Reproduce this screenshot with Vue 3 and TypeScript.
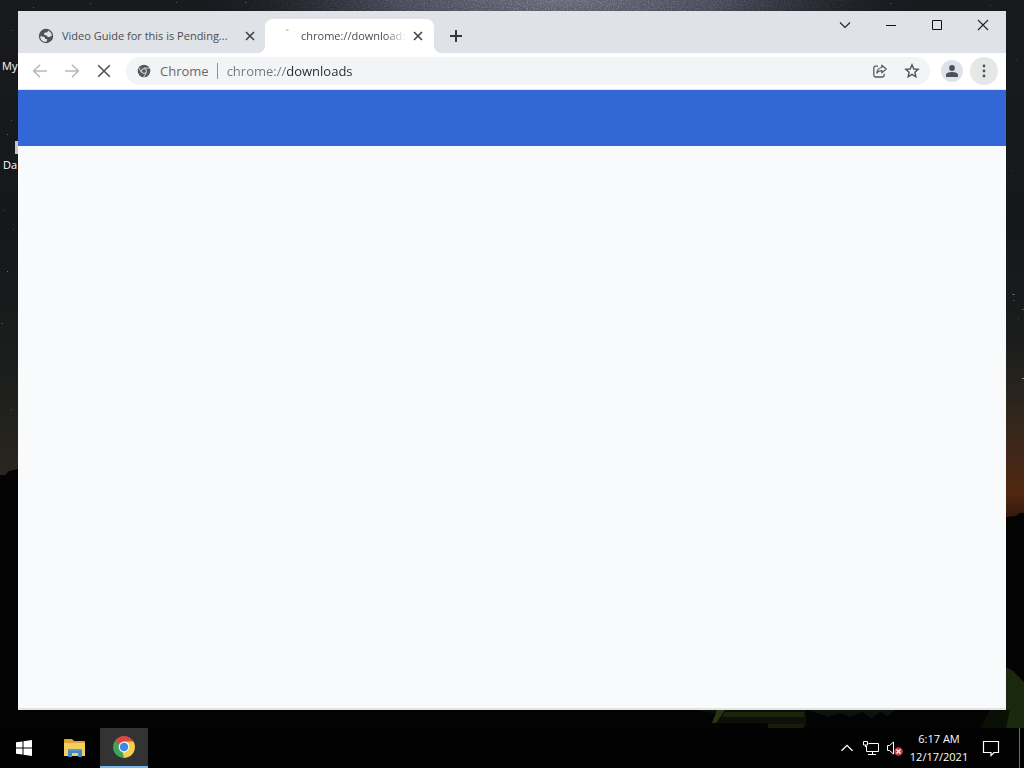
<script setup lang="ts">
import { ref } from 'vue'

const address = ref('chrome://downloads')
const stars: [number, number, number, number][] = [
  [12, 30, 1, 0.25], [33, 7, 1, 0.25], [90, 3, 1, 0.25], [176, 2, 1, 0.25], [245, 2, 2, 0.2],
  [7, 134, 1, 0.3], [11, 120, 1, 0.25], [4, 210, 1, 0.2], [13, 229, 1, 0.2], [7, 271, 1, 0.4],
  [1, 323, 2, 0.2], [11, 409, 1, 0.25], [1012, 294, 3, 0.3], [1013, 300, 2, 0.2],
  [1022, 309, 2, 0.25], [1018, 318, 1, 0.2], [1022, 378, 3, 0.5], [890, 3, 2, 0.15],
  [990, 5, 1, 0.2], [1016, 60, 1, 0.15], [1012, 170, 1, 0.15],
]
</script>

<template>
  <div class="desktop">
    <svg class="wallpaper" viewBox="0 0 1024 768" preserveAspectRatio="none" aria-hidden="true">
      <defs>
        <linearGradient id="sky" x1="0" y1="0" x2="0" y2="1">
          <stop offset="0" stop-color="#191a1e" />
          <stop offset="0.3" stop-color="#15181a" />
          <stop offset="0.5" stop-color="#1d1f1d" />
          <stop offset="0.62" stop-color="#29261f" />
        </linearGradient>
        <radialGradient id="milky" cx="0.5" cy="0.5" r="0.5">
          <stop offset="0" stop-color="#6a6878" />
          <stop offset="0.45" stop-color="#464858" />
          <stop offset="1" stop-color="#1b1c22" stop-opacity="0" />
        </radialGradient>
        <linearGradient id="glow" x1="0" y1="0" x2="0" y2="1">
          <stop offset="0" stop-color="#2a2720" stop-opacity="0" />
          <stop offset="0.55" stop-color="#3a271a" />
          <stop offset="0.85" stop-color="#502711" />
          <stop offset="1" stop-color="#32170c" />
        </linearGradient>
        <linearGradient id="fade" x1="0" y1="0" x2="1" y2="0">
          <stop offset="0" stop-color="#000" />
          <stop offset="0.5" stop-color="#fff" />
          <stop offset="1" stop-color="#000" />
        </linearGradient>
        <mask id="band"><rect x="200" width="720" height="11" fill="url(#fade)" /></mask>
        <filter id="grain" x="0" y="0" width="1" height="1">
          <feTurbulence type="fractalNoise" baseFrequency="0.7" numOctaves="2" seed="4" />
          <feColorMatrix values="0 0 0 0 0.75  0 0 0 0 0.75  0 0 0 0 0.85  1.6 0 0 0 -0.65" />
        </filter>
      </defs>
      <rect width="1024" height="768" fill="url(#sky)" />
      <ellipse cx="560" cy="0" rx="370" ry="60" fill="url(#milky)" />
      <g mask="url(#band)"><rect x="200" width="720" height="11" filter="url(#grain)" opacity="0.45" /></g>
      <rect x="1000" y="340" width="24" height="180" fill="url(#glow)" />
      <rect
        v-for="([x, y, w, o], i) in stars" :key="i"
        :x="x" :y="y" :width="w" height="1" fill="#fff" :opacity="o"
      />
      <path d="M0 475 5 475 9 471 18 469V520H1006V517L1016 516 1020 513 1024 513V768H0Z" fill="#030303" />
      <path d="M1006 667 1013 671 1024 682V728H990L1006 710Z" fill="#1a280b" />
      <path d="M990 710H1010L1006 728H980Z" fill="#0a1006" />
      <path d="M694 710H806V726H770L766 723H712L718 714Z" fill="#0c1008" />
      <path d="M717 710H725L716 723H712Z" fill="#2b3514" />
      <path d="M725 712H804V717H722Z" fill="#1a230b" />
      <path d="M768 724H804V728H768Z" fill="#161d0a" />
      <path d="M808 710H895L888 716 880 712 872 718 862 712 850 717 840 713 828 717Z" fill="#0d120a" />
    </svg>
    <span class="shortcut computer">My</span>
    <span class="shortcut data">Da</span>
    <span class="shortcut-art"></span>

    <main class="window">
      <header class="tabstrip">
        <div class="tab">
          <svg class="favicon" width="16" height="16" viewBox="0 0 16 16" aria-hidden="true">
            <circle cx="8" cy="8" r="7.2" fill="#505357" />
            <path d="M2.2 8.3 4.4 8.4C6.5 8.6 7.3 9.4 7 11H9V12.5C8.8 13.5 8 14 7.1 13.9 4.2 13.5 2.1 11.2 2.2 8.3ZM10 2.4C12.3 3.3 13.9 5.4 13.8 8L12.8 7.9C12.4 9 11 9.2 9.8 8.8 9 8.4 8.8 7.3 8 7.2 6.2 7 5.8 6.3 6.2 5.4 6.5 4.5 7.2 4.4 8.1 4.5 9.3 4.5 9.9 3.7 10 2.4Z" fill="#e1e4e8" />
          </svg>
          <span class="title">Video Guide for this is Pending...</span>
          <button class="close" aria-label="Close tab">
            <svg width="10" height="10" viewBox="0 0 10 10"><path d="M1 1 9 9M9 1 1 9" stroke="#3f4246" stroke-width="1.6" /></svg>
          </button>
        </div>
        <div class="tab active">
          <svg class="favicon" width="16" height="16" viewBox="0 0 16 16" aria-hidden="true">
            <path d="M9 2.5 11.5 1.7" stroke="#c4c6c8" stroke-width="1.6" />
          </svg>
          <span class="title">chrome://downloads</span>
          <button class="close" aria-label="Close tab">
            <svg width="10" height="10" viewBox="0 0 10 10"><path d="M1 1 9 9M9 1 1 9" stroke="#3f4246" stroke-width="1.6" /></svg>
          </button>
        </div>
        <button class="new-tab" aria-label="New tab">
          <svg width="12" height="12" viewBox="0 0 12 12"><path d="M6 0V12M0 6H12" stroke="#35383c" stroke-width="2" /></svg>
        </button>
        <div class="controls">
          <button aria-label="Search tabs">
            <svg width="12" height="12" viewBox="0 0 12 12"><path d="M1 3.5 6 8.5 11 3.5" fill="none" stroke="#222" stroke-width="1.1" /></svg>
          </button>
          <button aria-label="Minimize">
            <svg width="12" height="12" viewBox="0 0 12 12"><path d="M1 6.5H11" stroke="#111" /></svg>
          </button>
          <button aria-label="Maximize">
            <svg width="12" height="12" viewBox="0 0 12 12"><path d="M1.5 1.5H10.5V10.5H1.5Z" fill="none" stroke="#111" /></svg>
          </button>
          <button aria-label="Close">
            <svg width="12" height="12" viewBox="0 0 12 12"><path d="M1 1 11 11M11 1 1 11" stroke="#222" stroke-width="1.1" /></svg>
          </button>
        </div>
      </header>

      <nav class="toolbar" aria-label="Browser">
        <button class="nav" aria-label="Back">
          <svg width="16" height="16" viewBox="0 0 16 16"><path d="M15 8H2M8 1.7 1.7 8 8 14.3" fill="none" stroke="#b6b8bb" stroke-width="1.6" /></svg>
        </button>
        <button class="nav" aria-label="Forward">
          <svg width="16" height="16" viewBox="0 0 16 16"><path d="M1 8H14M8 1.7 14.3 8 8 14.3" fill="none" stroke="#b6b8bb" stroke-width="1.6" /></svg>
        </button>
        <button class="nav" aria-label="Stop">
          <svg width="16" height="16" viewBox="0 0 16 16"><path d="M2.2 2.2 13.8 13.8M13.8 2.2 2.2 13.8" stroke="#505357" stroke-width="1.6" /></svg>
        </button>
        <div class="omnibox">
          <svg width="14" height="14" viewBox="0 0 14 14" aria-hidden="true">
            <circle cx="7" cy="7" r="6.3" fill="#55585c" />
            <path d="M7 4.1H12.6M4.5 8.5 1.8 3.7M9.5 8.5 6.7 13.2" stroke="#f1f3f4" stroke-width="0.8" />
            <circle cx="7" cy="7" r="2.4" fill="#55585c" stroke="#f1f3f4" stroke-width="0.9" />
          </svg>
          <label for="address">Chrome</label>
          <input id="address" v-model="address" type="text" spellcheck="false" />
          <button aria-label="Share this page">
            <svg width="16" height="16" viewBox="0 0 16 16"><path d="M6 3.2H3.6Q1.8 3.2 1.8 5V12.2Q1.8 14 3.6 14H10.4Q12.2 14 12.2 12.2V10.8" fill="none" stroke="#56595d" stroke-width="1.3" /><path d="M9.8 2.2 14.3 6 9.8 9.8V7.6Q6.6 7.4 4.8 10.2 5.2 5.2 9.8 4.5Z" fill="none" stroke="#56595d" stroke-width="1.2" stroke-linejoin="round" /></svg>
          </button>
          <button aria-label="Bookmark this tab">
            <svg width="16" height="16" viewBox="0 0 16 16"><path d="M8 1.8 9.8 6 14.2 6.4 10.9 9.3 11.9 13.8 8 11.4 4.1 13.8 5.1 9.3 1.8 6.4 6.2 6Z" fill="none" stroke="#505357" stroke-width="1.4" /></svg>
          </button>
        </div>
        <button class="avatar" aria-label="Profile">
          <svg width="12" height="12" viewBox="0 0 12 12"><circle cx="6" cy="3" r="2.9" fill="#4c5160" /><path d="M0 12V10C0 7.8 3.5 7 6 7S12 7.8 12 10V12Z" fill="#4c5160" /></svg>
        </button>
        <button class="menu" aria-label="Menu">
          <svg width="4" height="14" viewBox="0 0 4 14"><g fill="#505357"><circle cx="2" cy="2" r="1.4" /><circle cx="2" cy="7" r="1.4" /><circle cx="2" cy="12" r="1.4" /></g></svg>
        </button>
      </nav>
      <div class="page-bar"></div>
      <section class="page"></section>
    </main>

    <footer class="taskbar">
      <button class="app" aria-label="Start">
        <svg width="16" height="16" viewBox="0 0 16 16"><path d="M0 2.3 6.5 1.4V7.5H0ZM7.5 1.2 16 0V7.5H7.5ZM0 8.5H6.5V14.6L0 13.7ZM7.5 8.5H16V16L7.5 14.8Z" fill="#fff" /></svg>
      </button>
      <button class="app" aria-label="File Explorer">
        <svg width="22" height="20" viewBox="-1 0 22 20"><path d="M0 2Q0 1 1 1H8L10 3H20Q21 3 21 4V18H0Z" fill="#dba735" /><path d="M0 5H21V18H0Z" fill="#f2cf62" /><path d="M4 11H18V19H14V15H8V19H4Z" fill="#3f87c6" /><path d="M4 11H18V13H4Z" fill="#5799ce" /></svg>
      </button>
      <button class="app running" aria-label="Google Chrome">
        <svg width="24" height="24" viewBox="0 0 24 24">
          <path d="M12 12 2.5 6.5A11 11 0 0 1 21.5 6.5Z" fill="#d94a40" />
          <path d="M12 12 21.5 6.5A11 11 0 0 1 12 23Z" fill="#f8cf4b" />
          <path d="M12 12V23A11 11 0 0 1 2.5 6.5Z" fill="#3fa459" />
          <path d="M12 6.5H21.5L17 14.5Z" fill="#f8cf4b" /><path d="M7 14.5 2.5 6.5 12 12Z" fill="#3fa459" /><path d="M12 23 17 14.5 10 15Z" fill="#f8cf4b" />
          <circle cx="12" cy="12" r="5.4" fill="#f4f6f8" /><circle cx="12" cy="12" r="4.2" fill="#4385e5" />
        </svg>
      </button>
      <div class="tray">
        <button aria-label="Show hidden icons">
          <svg width="14" height="14" viewBox="0 0 14 14"><path d="M1.5 9.8 7 4.3 12.5 9.8" fill="none" stroke="#fff" stroke-width="1.3" /></svg>
        </button>
        <button aria-label="Network">
          <svg width="16" height="16" viewBox="0 0 16 16"><path d="M5.5 3.5H15.5V11.5H3.5V6M9.5 11.5V14M5 14.5H13M.5 1.5H4.5V5H.5ZM2.5 5V7" fill="none" stroke="#fff" /></svg>
        </button>
        <button aria-label="Volume muted">
          <svg width="18" height="16" viewBox="0 0 18 16"><path d="M1.5 5.5H3.5L7.5 2V14L3.5 10.5H1.5Z" fill="none" stroke="#fff" /><circle cx="12.5" cy="11.5" r="4.3" fill="#d13a40" /><path d="M10.5 9.5 14.5 13.5M14.5 9.5 10.5 13.5" stroke="#fff" stroke-width="1.2" /></svg>
        </button>
        <button class="clock"><time>6:17 AM</time><time>12/17/2021</time></button>
        <button class="notify" aria-label="Notifications">
          <svg width="18" height="18" viewBox="0 0 18 18"><path d="M1.5 2.5H16.5V13.5H12L9 16.5V13.5H1.5Z" fill="none" stroke="#fff" stroke-width="1.2" /></svg>
        </button>
        <button class="peek" aria-label="Show desktop"></button>
      </div>
    </footer>
  </div>
</template>

<style>
body {
  margin: 0;
  background: #000;
}
</style>

<style scoped>
.desktop {
  position: relative;
  isolation: isolate;
  box-sizing: border-box;
  display: flex;
  flex-direction: column;
  min-height: 100vh;
  padding-top: 11px;
  overflow: hidden;
  font: 11px/18px "Open Sans", "Noto Sans", sans-serif;
}
button {
  display: flex;
  align-items: center;
  justify-content: center;
  padding: 0;
  border: 0;
  background: none;
  font: inherit;
}
svg {
  display: block;
  flex: none;
}
.wallpaper {
  position: absolute;
  z-index: -2;
  inset: 0;
  width: 100%;
  height: 100%;
}
.shortcut {
  position: absolute;
  z-index: -1;
  color: #fff;
}
.computer {
  left: 2px;
  top: 57px;
}
.data {
  left: 3px;
  top: 156px;
}
.shortcut-art {
  position: absolute;
  z-index: -1;
  left: 15px;
  top: 141px;
  width: 3px;
  height: 13px;
  background: #c9c2c8;
}
.window {
  display: flex;
  flex: 1;
  flex-direction: column;
  margin: 0 18px 18px;
  background: #f9fafc;
}
.tabstrip {
  display: flex;
  align-items: flex-end;
  height: 42px;
  padding-left: 12px;
  background: #dfe2e6;
}
.tab {
  position: relative;
  box-sizing: border-box;
  display: flex;
  align-items: center;
  width: 235px;
  height: 34px;
  padding: 0 7px 0 8px;
  color: #4b4e52;
}
.favicon {
  margin-right: 8px;
}
.tab .title {
  flex: 1;
  min-width: 0;
  white-space: nowrap;
}
.tab .close {
  width: 16px;
  height: 16px;
}
.tab.active {
  width: 169px;
  padding: 0 8px 0 12px;
  border-radius: 8px 8px 0 0;
  background: #fff;
}
.tab.active .title {
  margin-right: 4px;
  mask-image: linear-gradient(to right, #000 80%, transparent);
}
.tab.active::before,
.tab.active::after {
  content: "";
  position: absolute;
  bottom: 0;
  width: 8px;
  height: 8px;
}
.tab.active::before {
  right: 100%;
  background: radial-gradient(circle at 0 0, transparent 8px, #fff 8px);
}
.tab.active::after {
  left: 100%;
  background: radial-gradient(circle at 100% 0, transparent 8px, #fff 8px);
}
.new-tab {
  width: 28px;
  height: 34px;
  margin-left: 8px;
}
.controls {
  display: flex;
  align-self: flex-start;
  margin-left: auto;
}
.controls button {
  width: 46px;
  height: 28px;
}
.toolbar {
  box-sizing: border-box;
  display: flex;
  align-items: center;
  height: 37px;
  padding: 0 8px 0 6px;
  border-bottom: 1px solid #dfe8f8;
  background: #fff;
}
.nav {
  width: 32px;
  height: 28px;
}
.omnibox {
  display: flex;
  flex: 1;
  align-items: center;
  height: 28px;
  margin-left: 6px;
  padding: 0 2px 0 11px;
  border-radius: 14px;
  background: #f3f4f5;
  font-size: 13px;
  line-height: 20px;
}
.omnibox label {
  display: flex;
  align-items: center;
  gap: 8px;
  margin-left: 9px;
  color: #66696d;
}
.omnibox label::after {
  content: "";
  width: 1px;
  height: 16px;
  background: #8f9296;
}
.omnibox input {
  flex: 1;
  min-width: 0;
  padding: 0 0 0 9px;
  border: 0;
  outline: 0;
  background: linear-gradient(to right, #74777b 69px, #27292c 69px) text;
  color: transparent;
  caret-color: #27292c;
  font: inherit;
}
.omnibox button {
  width: 32px;
  height: 28px;
}
.avatar {
  width: 22px;
  height: 22px;
  margin: 0 7px 0 11px;
  border-radius: 50%;
  background: #dfe2e9;
}
.menu {
  width: 28px;
  height: 28px;
  border-radius: 50%;
  background: #e6e7e7;
}
.page-bar {
  height: 56px;
  background: #3367d6;
}
.page {
  flex: 1;
  border-bottom: 2px solid #e3e4e5;
}
.taskbar {
  display: flex;
  gap: 2px;
  height: 40px;
  background: #020202;
  color: #fff;
}
.app {
  width: 48px;
}
.running {
  border-bottom: 2px solid #76b9ed;
  background: #333;
}
.tray {
  display: flex;
  margin-left: auto;
}
.tray button {
  width: 24px;
  color: inherit;
}
.tray .clock {
  flex-direction: column;
  width: 64px;
}
.tray .notify {
  width: 40px;
  margin-right: 8px;
}
.tray .peek {
  width: 5px;
  border-left: 1px solid #6b6b6b;
}
</style>
